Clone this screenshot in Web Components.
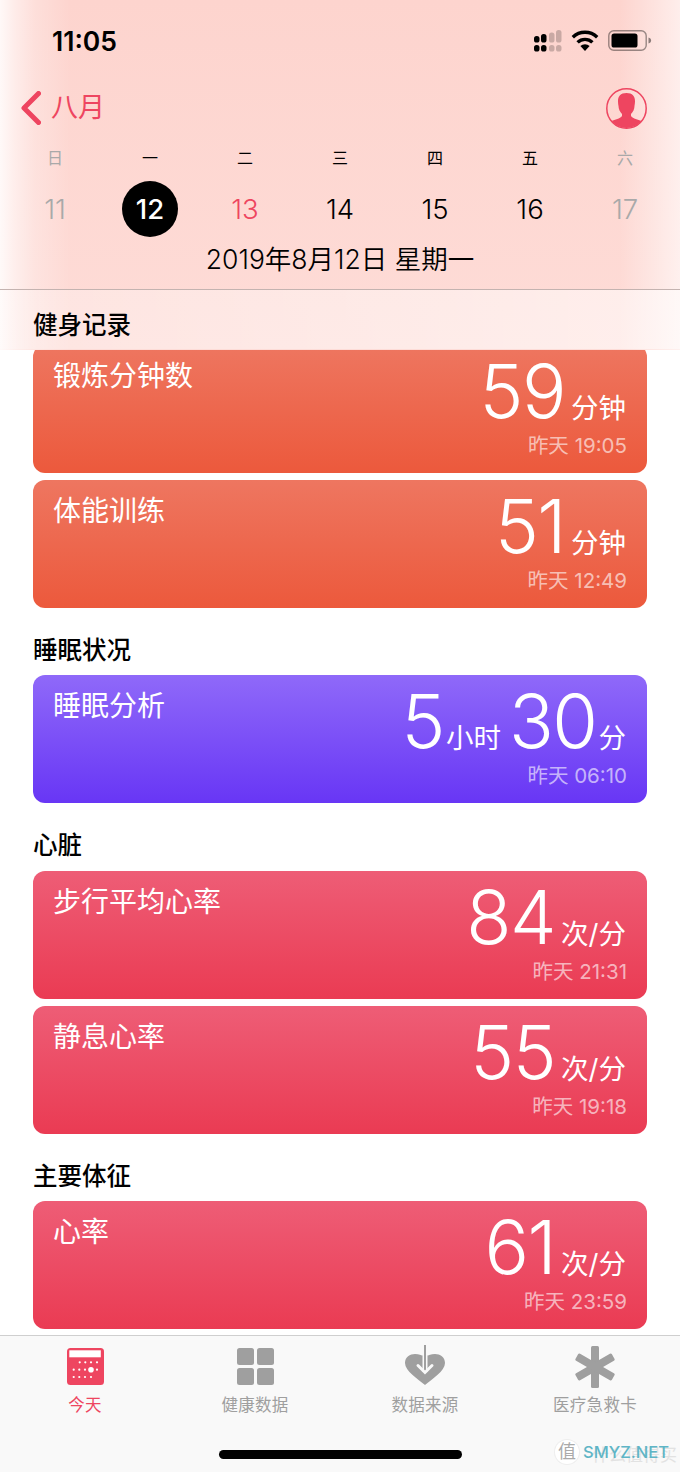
<!DOCTYPE html>
<html lang="zh">
<head>
<meta charset="utf-8">
<title>Health</title>
<style>
  html, body { margin: 0; padding: 0; background: #fff; }
  body { font-family: Inter, "Noto Sans CJK SC", sans-serif; }
</style>
</head>
<body>
<health-app>
  <date-header slot="header"></date-header>
  <health-card kind="orange" title="锻炼分钟数" time="昨天 19:05"><b>59</b><i>分钟</i></health-card>
  <health-card kind="orange" title="体能训练" time="昨天 12:49"><b>51</b><i>分钟</i></health-card>
  <section-title>睡眠状况</section-title>
  <health-card kind="purple" title="睡眠分析" time="昨天 06:10"><b>5</b><i class="tight">小时</i><b class="next">30</b><i class="tight">分</i></health-card>
  <section-title>心脏</section-title>
  <health-card kind="red" title="步行平均心率" time="昨天 21:31"><b>84</b><i>次/分</i></health-card>
  <health-card kind="red" title="静息心率" time="昨天 19:18"><b>55</b><i>次/分</i></health-card>
  <section-title>主要体征</section-title>
  <health-card kind="red" title="心率" time="昨天 23:59"><b>61</b><i>次/分</i></health-card>
  <tab-bar slot="footer"></tab-bar>
</health-app>

<script>
"use strict";

const kSans = 'Inter, "Noto Sans CJK SC", sans-serif';
const kRed = "#ee4560";

// Page frame: header on top of the list, tab bar pinned at the bottom.
class HealthApp extends HTMLElement {
  constructor() {
    super();
    this.attachShadow({mode: "open"}).innerHTML = `
      <style>
        :host { display: flex; flex-direction: column; width: 680px; height: 1472px; overflow: hidden; background: #fff; font-family: ${kSans}; }
        #head { display: block; position: relative; z-index: 1; margin-bottom: -5px; }
        #list { flex: 1; display: flex; flex-direction: column; gap: 7px; padding: 0 33px; overflow: hidden; }
      </style>
      <div id="head"><slot name="header"></slot></div>
      <div id="list"><slot></slot></div>
      <slot name="footer"></slot>
    `;
  }
}

class DateHeader extends HTMLElement {
  constructor() {
    super();
    var days = [["日", "11", "off"], ["一", "12", "now"], ["二", "13", "red"], ["三", "14", ""], ["四", "15", ""], ["五", "16", ""], ["六", "17", "off"]];
    var cols = days.map(function(d) {
      return `<div class="col ${d[2]}"><span class="wd">${d[0]}</span><span class="num">${d[1]}</span></div>`;
    }).join("");
    this.attachShadow({mode: "open"}).innerHTML = `
      <style>
        :host { display: block; height: 350px; color: #000;
          background:
            linear-gradient(90deg, rgba(255,255,255,.85) 0, rgba(255,255,255,.55) 15px, rgba(255,255,255,.25) 35px, rgba(255,255,255,0) 70px, rgba(255,255,255,0) 620px, rgba(255,255,255,.3) 650px, rgba(255,255,255,.6) 680px),
            linear-gradient(#fdd4ce, #fedcd7); }
        #top { height: 289px; display: flex; flex-direction: column; }
        #status { height: 80px; display: flex; align-items: center; justify-content: space-between; padding: 0 28px 0 52px; box-sizing: border-box; }
        #clock { font-size: 26.5px; font-weight: 600; margin-top: 1px; }
        #sicons { display: flex; align-items: center; gap: 9px; margin-top: 1px; }
        #nav { height: 56px; display: flex; align-items: center; justify-content: space-between; padding: 0 33px 0 21px; }
        #back { display: flex; align-items: center; gap: 11px; color: ${kRed}; font-size: 27px; line-height: 34px; }
        #back span { margin-left: -1px; }
        #week { display: grid; grid-template-columns: repeat(7, 95px); padding: 0 7.5px; }
        .col { display: flex; flex-direction: column; align-items: center; }
        .wd { height: 22px; line-height: 22px; font-size: 16px; margin-top: 11px; }
        .num { width: 56px; height: 56px; line-height: 56px; margin-top: 12px; text-align: center; font-size: 27.5px; font-weight: 350; border-radius: 50%; }
        .off { color: #a9a9a9; }
        .red .num { color: ${kRed}; }
        .now .num { background: #000; color: #fff; font-weight: 500; }
        #date { text-align: center; font-size: 26.5px; font-weight: 350; line-height: 32px; margin-top: 6px; }
        #label { height: 60px; box-sizing: border-box; border-top: 1px solid #c4b3b0; padding: 21px 33px 0;
          background: linear-gradient(90deg, rgba(255,255,255,.25), rgba(255,255,255,.4) 50%, rgba(255,255,255,.55));
          font-size: 24.5px; font-weight: 500; line-height: 28px; }
      </style>
      <div id="top">
        <div id="status">
          <span id="clock">11:05</span>
          <span id="sicons">
            <svg width="28" height="22" viewBox="0 0 28 22">
              <g fill="#000"><rect x="0" y="6" width="5.5" height="6.5" rx="2.6"/><rect x="7" y="4" width="5.5" height="8.5" rx="2.6"/><rect x="0" y="15" width="5.5" height="6.5" rx="2.6"/><rect x="7" y="15" width="5.5" height="6.5" rx="2.6"/></g>
              <g fill="#000" opacity=".2"><rect x="15" y="2.5" width="5.5" height="10" rx="2.6"/><rect x="22" y="0" width="5.5" height="12.5" rx="2.6"/><rect x="15" y="15" width="5.5" height="6.5" rx="2.6"/><rect x="22" y="15" width="5.5" height="6.5" rx="2.6"/></g>
            </svg>
            <svg width="28" height="21" viewBox="0 0 28 21">
              <path d="M14 21l-4.6-5a6.6 6.6 0 0 1 9.2 0z" fill="#000"/>
              <path d="M6.6 12.4a10.6 10.6 0 0 1 14.8 0M1.8 7.2a17.6 17.6 0 0 1 24.4 0" fill="none" stroke="#000" stroke-width="3.4"/>
            </svg>
            <svg width="44" height="21" viewBox="0 0 44 21">
              <rect x=".8" y=".8" width="37.4" height="19.4" rx="5" fill="none" stroke="#000" stroke-opacity=".4" stroke-width="1.4"/>
              <rect x="3.5" y="3.5" width="26" height="14" rx="2.6" fill="#000"/>
              <path d="M40.5 7.5c1.6.4 2.6 1.5 2.6 3s-1 2.6-2.6 3z" fill="#000" fill-opacity=".45"/>
            </svg>
          </span>
        </div>
        <div id="nav">
          <span id="back">
            <svg width="20" height="34" viewBox="0 0 20 34"><path d="M17.5 2.5L3 17l14.5 14.5" fill="none" stroke="${kRed}" stroke-width="5" stroke-linecap="round" stroke-linejoin="round"/></svg>
            <span>八月</span>
          </span>
          <svg width="41" height="41" viewBox="0 0 41 41">
            <defs><clipPath id="c"><circle cx="20.5" cy="20.5" r="19.5"/></clipPath></defs>
            <circle cx="20.5" cy="20.5" r="19.7" fill="none" stroke="${kRed}" stroke-width="1.5"/>
            <path clip-path="url(#c)" fill="${kRed}" d="M20.5 5C14.5 5 12 8.5 12 13c0 2 .3 4 .5 5 0 3 1.5 6 3.5 8v2c-2 3-7 3.5-10.5 5L5 41h31l-.5-8c-3.5-1.5-8.5-2-10.5-5v-2c2-2 3.5-5 3.5-8 .2-1 .5-3 .5-5 0-4.5-2.5-8-8.5-8z"/>
          </svg>
        </div>
        <div id="week">${cols}</div>
        <div id="date">2019年8月12日 星期一</div>
      </div>
      <div id="label">健身记录</div>
    `;
  }
}

class SectionTitle extends HTMLElement {
  constructor() {
    super();
    this.attachShadow({mode: "open"}).innerHTML = `
      <style>
        :host { display: block; flex: none; height: 53.4px; box-sizing: border-box; padding-top: 21px; color: #000; font-size: 24.5px; font-weight: 500; line-height: 28px; }
      </style>
      <slot></slot>
    `;
  }
}

// One data tile. Values go in the light DOM: <b> is a big number, <i> a unit.
class HealthCard extends HTMLElement {
  static get observedAttributes() { return [ "title", "time" ]; }

  constructor() {
    super();
    this.attachShadow({mode: "open"}).innerHTML = `
      <style>
        :host { display: flex; justify-content: space-between; flex: none; height: 128px; box-sizing: border-box; padding: 12px 20px 0; border-radius: 12px; color: #fff; }
        :host([kind=orange]) { background: linear-gradient(#ee7660, #ec593c); }
        :host([kind=purple]) { background: linear-gradient(#8f69f9, #6836f5); }
        :host([kind=red]) { background: linear-gradient(#ee5d76, #ea3b53); }
        #title { font-size: 28px; line-height: 36px; margin-top: 1px; }
        #side { display: flex; flex-direction: column; align-items: flex-end; }
        #value { display: flex; align-items: baseline; height: 74px; line-height: 74px; margin-top: -3px; padding-right: 1px; }
        #time { font-size: 20.5px; line-height: 26px; margin-top: 5px; color: rgba(255,255,255,.62); }
        ::slotted(b) { font-size: 74px; font-weight: 260; letter-spacing: -1.5px; }
        ::slotted(b.next) { margin-left: 8px; }
        ::slotted(i) { font-style: normal; font-size: 27.5px; margin-left: 6px; }
        ::slotted(i.tight) { margin-left: 2px; }
      </style>
      <div id="title"></div>
      <div id="side">
        <div id="value"><slot></slot></div>
        <div id="time"></div>
      </div>
    `;
  }

  attributeChangedCallback(name, oldValue, newValue) {
    this.shadowRoot.getElementById(name).textContent = newValue;
  }
}

class TabItem extends HTMLElement {
  constructor() {
    super();
    this.attachShadow({mode: "open"}).innerHTML = `
      <style>
        :host { display: flex; flex-direction: column; align-items: center; width: 170px; color: #9f9f9f; font-size: 16.5px; }
        :host([active]) { color: ${kRed}; }
        #icon { height: 42px; display: flex; align-items: center; justify-content: center; }
        #text { margin-top: 5px; line-height: 24px; letter-spacing: .3px; }
      </style>
      <div id="icon"><slot name="icon"></slot></div>
      <div id="text"><slot></slot></div>
    `;
  }
}

class TabBar extends HTMLElement {
  constructor() {
    super();
    // Calendar dots, in icon coordinates.
    var dots = "";
    [[14.3, [12.7, 18.3, 24, 30]], [21.7, [6.7, 12.3, 18, 30]], [29, [6.7, 12.3, 18, 24]]].forEach(function(row) {
      row[1].forEach(function(x) { dots += `<circle cx="${x}" cy="${row[0]}" r="1.1"/>`; });
    });
    this.attachShadow({mode: "open"}).innerHTML = `
      <style>
        :host { display: block; position: relative; flex: none; height: 137px; box-sizing: border-box; background: #f9f9f9; border-top: 1.5px solid #cfcfcf; }
        #tabs { display: flex; padding-top: 9.5px; }
        #home { position: absolute; left: 219px; top: 113.5px; width: 243px; height: 9px; border-radius: 5px; background: #000; }
        #mark { position: absolute; left: 555px; top: 104px; display: flex; align-items: center; gap: 4px; }
        #seal { width: 24px; height: 24px; border-radius: 50%; background: #fff; color: #aaa; font-size: 18px; line-height: 24px; text-align: center; box-shadow: 0 0 0 1px #eee; }
        #brand { position: relative; font-size: 16.5px; font-weight: 500; color: #5fb5c6; }
        #ghost { position: absolute; left: 592px; top: 105px; font-size: 17px; letter-spacing: 0; color: #e2e2e2; }
      </style>
      <div id="tabs">
        <tab-item active>
          <svg slot="icon" width="37" height="37" viewBox="0 0 37 37">
            <rect width="37" height="37" rx="3.5" fill="${kRed}"/>
            <rect x="2.3" y="2.3" width="31.5" height="7" fill="#fff"/>
            <g fill="#fff">${dots}<circle cx="24" cy="21.7" r="2.8"/></g>
          </svg>
          今天
        </tab-item>
        <tab-item>
          <svg slot="icon" width="37" height="37" viewBox="0 0 37 37" fill="#9f9f9f">
            <rect width="17" height="17" rx="2.5"/><rect x="20" width="17" height="17" rx="2.5"/>
            <rect y="20" width="17" height="17" rx="2.5"/><rect x="20" y="20" width="17" height="17" rx="2.5"/>
          </svg>
          健康数据
        </tab-item>
        <tab-item>
          <svg slot="icon" width="42" height="42" viewBox="0 1 42 42" style="overflow: visible">
            <path d="M21 40C14 34 1 26 1 18c0-6 5-9 10-9 4 0 8 1 10 4 2-3 6-4 10-4 5 0 10 3 10 9 0 8-13 16-20 22z" fill="#9f9f9f"/>
            <path d="M21 11v16" stroke="#f9f9f9" stroke-width="5"/>
            <path d="M21 0v27" stroke="#9f9f9f" stroke-width="2"/>
            <path d="M14 20.5l7 7 7-7" fill="none" stroke="#f9f9f9" stroke-width="3" stroke-linecap="round"/>
          </svg>
          数据来源
        </tab-item>
        <tab-item>
          <svg slot="icon" width="40" height="42" viewBox="0 0 40 42" fill="#9f9f9f">
            <rect x="16" y="0" width="8" height="42" rx="1.5"/>
            <rect x="16" y="0" width="8" height="42" rx="1.5" transform="rotate(60 20 21)"/>
            <rect x="16" y="0" width="8" height="42" rx="1.5" transform="rotate(-60 20 21)"/>
          </svg>
          医疗急救卡
        </tab-item>
      </div>
      <div id="home"></div>
      <div id="ghost">什么值得买</div>
      <div id="mark"><span id="seal">值</span><span id="brand">SMYZ.NET</span></div>
    `;
  }
}

customElements.define("health-app", HealthApp);
customElements.define("date-header", DateHeader);
customElements.define("section-title", SectionTitle);
customElements.define("health-card", HealthCard);
customElements.define("tab-item", TabItem);
customElements.define("tab-bar", TabBar);
</script>
</body>
</html>
